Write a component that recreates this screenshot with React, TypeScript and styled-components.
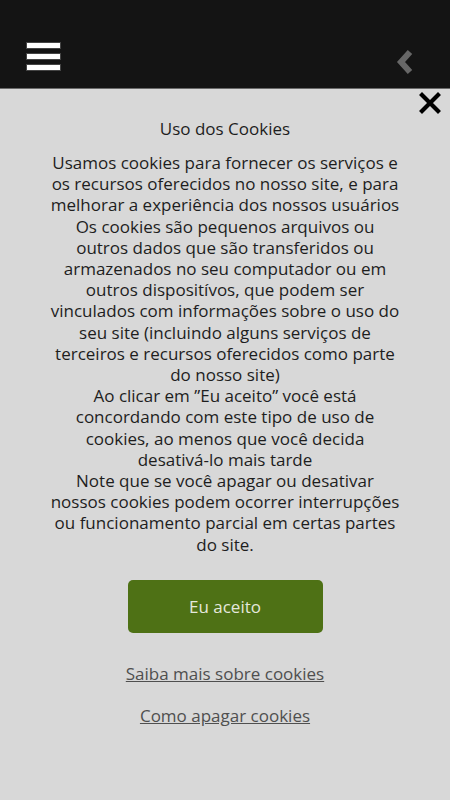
import React from 'react';
import styled, { createGlobalStyle } from 'styled-components';

const GlobalStyle = createGlobalStyle`
  html, body {
    margin: 0;
    padding: 0;
    background: #d8d8d8;
    font-family: 'Open Sans', 'Liberation Sans', sans-serif;
  }
`;

const Page = styled.div`
  min-height: 800px;
  background: #d8d8d8;
`;

const TopBar = styled.header`
  height: 89px;
  background: #141414;
  border-bottom: 1px solid #6a6a6a;
  display: flex;
  align-items: flex-end;
  justify-content: space-between;
  padding: 0 34px 15px 26px;
  box-sizing: border-box;
`;

const Burger = styled.div`
  display: flex;
  flex-direction: column;
  gap: 4px;
  width: 35px;
  margin-bottom: 2px;
`;

const Bar = styled.span`
  display: block;
  height: 5px;
  background: #ffffff;
  border: 1px solid #444;
`;

const Chevron = styled.svg`
  width: 20px;
  height: 26px;
  margin-bottom: -2px;
`;

const Sheet = styled.section`
  position: relative;
  display: flex;
  flex-direction: column;
  align-items: center;
  padding: 29px 0 0;
`;

const Close = styled.svg`
  position: absolute;
  top: 3px;
  right: 9px;
  width: 22px;
  height: 22px;
`;

const Title = styled.h1`
  margin: 0 0 12px;
  font-size: 17px;
  font-weight: 400;
  color: #1e1e1e;
  line-height: 22px;
`;

const Body = styled.div`
  width: 352px;
  text-align: center;
  color: #1e1e1e;
  font-size: 17px;
  line-height: 21.2px;
`;

const Para = styled.p`
  margin: 0;
`;

const AcceptButton = styled.button`
  margin-top: 25px;
  width: 195px;
  height: 53px;
  border: none;
  border-radius: 5px;
  background: #4e7115;
  color: #e4e8dc;
  font-family: inherit;
  font-size: 17px;
`;

const MoreLink = styled.a<{ $top: number }>`
  margin-top: ${p => p.$top}px;
  color: #4f4f4f;
  font-size: 17px;
  line-height: 22px;
  text-decoration: underline;
`;

export default function App() {
  return (
    <Page>
      <GlobalStyle />
      <TopBar>
        <Burger>
          <Bar />
          <Bar />
          <Bar />
        </Burger>
        <Chevron viewBox="0 0 20 26">
          <path d="M14 3 L5 13 L14 23" fill="none" stroke="#676767" strokeWidth="6" strokeLinejoin="miter" />
        </Chevron>
      </TopBar>
      <Sheet>
        <Close viewBox="0 0 22 22">
          <path d="M3 3 L19 19 M19 3 L3 19" stroke="#000" strokeWidth="4.2" strokeLinecap="square" />
        </Close>
        <Title>Uso dos Cookies</Title>
        <Body>
          <Para>Usamos cookies para fornecer os serviços e os recursos oferecidos no nosso site, e para melhorar a experiência dos nossos usuários</Para>
          <Para>Os cookies são pequenos arquivos ou outros dados que são transferidos ou armazenados no seu computador ou em outros dispositívos, que podem ser vinculados com informações sobre o uso do seu site (incluindo alguns serviços de terceiros e recursos oferecidos como parte do nosso site)</Para>
          <Para>Ao clicar em ”Eu aceito” você está concordando com este tipo de uso de cookies, ao menos que você decida desativá-lo mais tarde</Para>
          <Para>Note que se você apagar ou desativar nossos cookies podem ocorrer interrupções ou funcionamento parcial em certas partes do site.</Para>
        </Body>
        <AcceptButton>Eu aceito</AcceptButton>
        <MoreLink href="#" $top={30}>Saiba mais sobre cookies</MoreLink>
        <MoreLink href="#" $top={20}>Como apagar cookies</MoreLink>
      </Sheet>
    </Page>
  );
}
